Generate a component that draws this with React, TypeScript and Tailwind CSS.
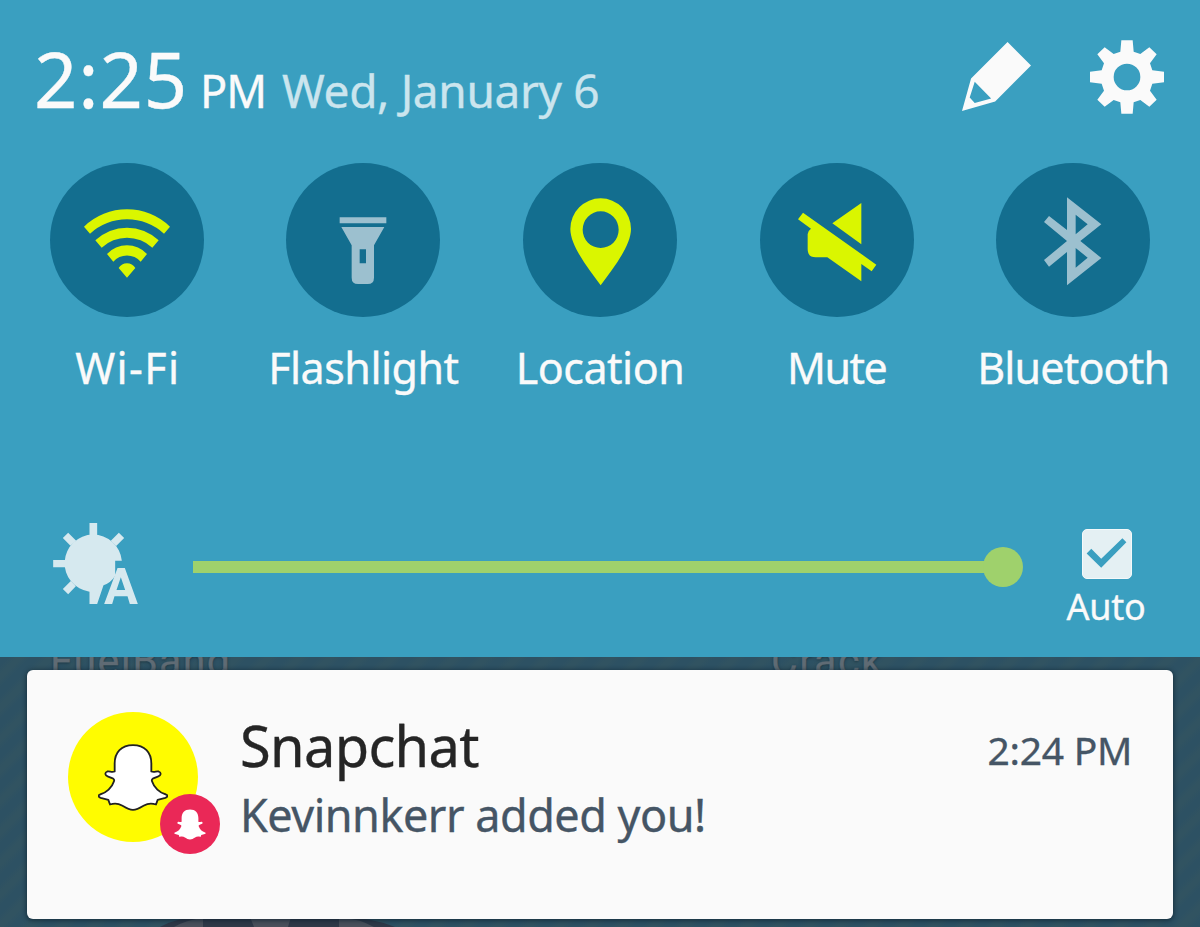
import type { ReactNode } from "react";

const GHOST =
  "M105 3C70 3 50 25 50 58V82C41 86 35 80 28 82C19 85 21 95 30 97C41 101 51 104 48 111C42 130 25 146 6 151C0 153 1 159 8 161L31 167L36 181C50 176 62 178 72 184C85 192 92 197 105 197C118 197 125 192 138 184C148 178 160 176 174 181L179 167L202 161C209 159 210 153 204 151C185 146 168 130 162 111C159 104 169 101 180 97C189 95 191 85 182 82C175 80 169 86 160 82V58C160 25 140 3 105 3Z";

function PencilIcon() {
  return (
    <svg className="h-[69px] w-[69px]" viewBox="0 0 206 206" fill="#fafafa">
      <path
        fillRule="evenodd"
        d="M136 0L206 70L99 178L0 206L27 109ZM38 119L23 166L38 182L87 169Z"
      />
    </svg>
  );
}

function GearIcon() {
  return (
    <svg className="h-[74px] w-[74px]" viewBox="0 0 222 222" fill="#fafafa">
      <path
        fillRule="evenodd"
        d="M94 1H128L131 35L151 42L178 22L200 43L180 70L187 91L222 95V127L187 131L180 152L200 179L178 200L151 180L131 187L128 221H94L91 187L71 180L44 200L22 179L42 152L35 131L0 127V95L35 91L42 70L22 43L44 22L71 42L91 35ZM111 71A40 40 0 1 0 111 151A40 40 0 1 0 111 71Z"
      />
    </svg>
  );
}

function AutoBrightnessIcon() {
  return (
    <svg className="h-[81px] w-[85px]" viewBox="0 0 254 243" fill="#d6e9ef">
      <path d="M206 113A86 86 0 1 0 109 206V243H132L151 187Q174 178 186 158V113Z" />
      <path d="M109 0H132V45H109ZM0 111H42V133H0ZM45 29L69 53L52 68L29 45ZM197 29L213 45L189 69L173 53ZM29 198L53 174L68 190L45 214Z" />
      <path
        fillRule="evenodd"
        d="M193 135H215L254 243H230L223 220H184L177 243H153ZM203 163L190 201H216Z"
      />
    </svg>
  );
}

function CheckBox() {
  return (
    <span className="flex h-[50px] w-[50px] rounded-[5px] border border-[#f4f9fa] bg-[#e4f0f3]">
      <svg className="h-[48px] w-[48px]" viewBox="3 3 145 145" fill="#3a9fc0">
        <path d="M14 74L28 60L58 90L122 28L134 40L58 117Z" />
      </svg>
    </span>
  );
}

interface Toggle {
  label: string;
  on: boolean;
  labelClass: string;
  icon: ReactNode;
}

const toggles: Toggle[] = [
  {
    label: "Wi-Fi",
    on: true,
    labelClass: "tracking-[1.4px] pl-[2px]",
    icon: (
      <path d="M101 190A186 186 0 0 1 359 190L341 211A165 165 0 0 0 119 211ZM135 231A138 138 0 0 1 325 231L306 253A111 111 0 0 0 154 253ZM170 272A82 82 0 0 1 290 272L271 295A54 54 0 0 0 189 295ZM205 314A29 29 0 0 1 255 314L230 343Z" />
    ),
  },
  {
    label: "Flashlight",
    on: false,
    labelClass: "tracking-[-0.5px]",
    icon: (
      <path
        fillRule="evenodd"
        d="M160 162H300V180H160ZM165 191H294L263 246V343Q263 362 244 362H215Q196 362 196 343V246ZM220 258V300H239V258Z"
      />
    ),
  },
  {
    label: "Location",
    on: true,
    labelClass: "tracking-[-0.5px]",
    icon: (
      <path
        fillRule="evenodd"
        d="M232 366C195 315 141 248 141 197A91 92 0 0 1 323 197C323 248 269 315 232 366ZM232 144A54 55 0 1 0 232 254A54 55 0 1 0 232 144Z"
      />
    ),
  },
  {
    label: "Mute",
    on: true,
    labelClass: "tracking-[-1.6px]",
    icon: (
      <path d="M113 168L128 148L348 304L334 324L303 302V354L201 282H166Q142 282 142 258V212Q142 203 152 196ZM216 180L303 119V243Z" />
    ),
  },
  {
    label: "Bluetooth",
    on: false,
    labelClass: "tracking-[-0.85px]",
    icon: (
      <path
        fillRule="evenodd"
        d="M212 102L315 183L252 233L315 284L212 366V266L158 310L143 290L212 233L143 176L158 158L212 200ZM238 154V213L274 183ZM238 254V313L274 283Z"
      />
    ),
  },
];

function QuickToggle({ label, on, labelClass, icon }: Toggle) {
  return (
    <div className="flex flex-col items-center">
      <div className="h-[154px] w-[154px] rounded-full bg-[#136e8f]">
        <svg className={on ? "h-full w-full fill-[#daf600]" : "h-full w-full fill-[#9cc0cf]"} viewBox="-1 -1 462 462">
          {icon}
        </svg>
      </div>
      <span className={`mt-[26px] whitespace-nowrap text-[43px] leading-[50px] ${labelClass}`}>{label}</span>
    </div>
  );
}

function Notification() {
  return (
    <article className="relative mx-[27px] mt-[13px] flex h-[249px] rounded-[6px] bg-[#fafafa] pt-[42px] pr-[41px] pl-[41px] shadow-[0_1px_4px_1px_rgba(10,30,45,0.6)]">
      <div className="relative flex h-[130px] w-[130px] shrink-0 items-center justify-center rounded-full bg-[#fffc00]">
        <svg className="h-[67px] w-[70px]" viewBox="0 0 210 200" fill="#fff" stroke="#222" strokeWidth="5.5" strokeLinejoin="round">
          <path d={GHOST} />
        </svg>
        <span className="absolute top-[82px] left-[92px] flex h-[60px] w-[60px] items-center justify-center rounded-full bg-[#ea2857]">
          <svg className="h-[31px] w-[32px]" viewBox="0 0 210 200" preserveAspectRatio="none" fill="#fff">
            <path d={GHOST} />
          </svg>
        </span>
      </div>
      <div className="ml-[42px] flex flex-1 flex-col">
        <div className="flex items-start justify-between">
          <h2 className="text-[56px] leading-[66px] tracking-[-0.7px] text-[#252525]">Snapchat</h2>
          <time className="mt-[14px] text-[39px] leading-[48px] tracking-[-0.3px] text-[#455565]">2:24 PM</time>
        </div>
        <p className="mt-[7px] text-[45px] leading-[60px] tracking-[-0.5px] whitespace-nowrap text-[#455565]">Kevinnkerr added you!</p>
      </div>
    </article>
  );
}

export default function App() {
  return (
    <div className="flex h-[927px] w-[1200px] flex-col overflow-hidden bg-[#305262] font-['Noto_Sans',sans-serif] [-webkit-text-stroke:0.35px_currentColor]">
      <section className="relative z-10 flex h-[657px] shrink-0 flex-col bg-[#3a9fc0] text-[#fafafa]">
        <header className="flex h-[163px] shrink-0 items-start pr-[36px] pl-[34px]">
          <div className="flex flex-1 items-baseline pt-[39px] whitespace-nowrap">
            <span className="text-[76px] leading-[80px] tracking-[0.8px]">2:25</span>
            <span className="ml-[12px] text-[45px] leading-[60px] tracking-[-1px]">PM</span>
            <span className="ml-[16px] text-[46px] leading-[60px] tracking-[-0.35px] text-[#cbe5ee]">Wed, January 6</span>
          </div>
          <div className="flex items-start gap-[59px] pt-[40px]">
            <span className="pt-[2px]">
              <PencilIcon />
            </span>
            <GearIcon />
          </div>
        </header>

        <div className="grid grid-cols-5 px-[8.5px]">
          {toggles.map((t) => (
            <QuickToggle key={t.label} {...t} />
          ))}
        </div>

        <div className="mt-[130px] flex items-start pl-[53px]">
          <AutoBrightnessIcon />
          <div className="mt-[24px] ml-[55px] flex h-[40px] w-[830px] items-center">
            <span className="h-[12px] flex-1 bg-[#9fd16c]" />
            <span className="-ml-px h-[40px] w-[40px] rounded-full bg-[#9fd16c]" />
          </div>
          <div className="mt-[6px] ml-[34px] flex w-[100px] flex-col items-center">
            <CheckBox />
            <span className="mt-[6px] mr-[2px] text-[36px] leading-[44px] tracking-[-0.3px]">Auto</span>
          </div>
        </div>
      </section>

      <section className="relative h-[270px] overflow-hidden bg-[repeating-linear-gradient(135deg,#2d5163_0px,#2d5163_6px,#315361_12px,#315361_16px,#2d5163_22px)]">
        <span className="absolute top-[-24px] left-[50px] font-[Roboto,sans-serif] text-[41px] leading-[56px] tracking-[1.4px] text-[#5f6b74] [text-shadow:0_1px_3px_rgba(20,40,50,0.7)]">FuelBand</span>
        <span className="absolute top-[-24px] left-[771px] font-[Roboto,sans-serif] text-[41px] leading-[56px] tracking-[1.6px] text-[#5f6b74] [text-shadow:0_1px_3px_rgba(20,40,50,0.7)]">Crack</span>
        <svg className="absolute bottom-0 left-[160px] h-[10px] w-[240px]" viewBox="0 0 240 10">
          <path d="M0 10Q18 0 42 0H180Q210 0 235 10Z" fill="#2f3948" />
          <path d="M14 10Q26 3 43 1V10ZM90 0H131L128 10H94ZM179 0Q200 2 214 10H179Z" fill="#4a505b" />
        </svg>
        <Notification />
      </section>
    </div>
  );
}
